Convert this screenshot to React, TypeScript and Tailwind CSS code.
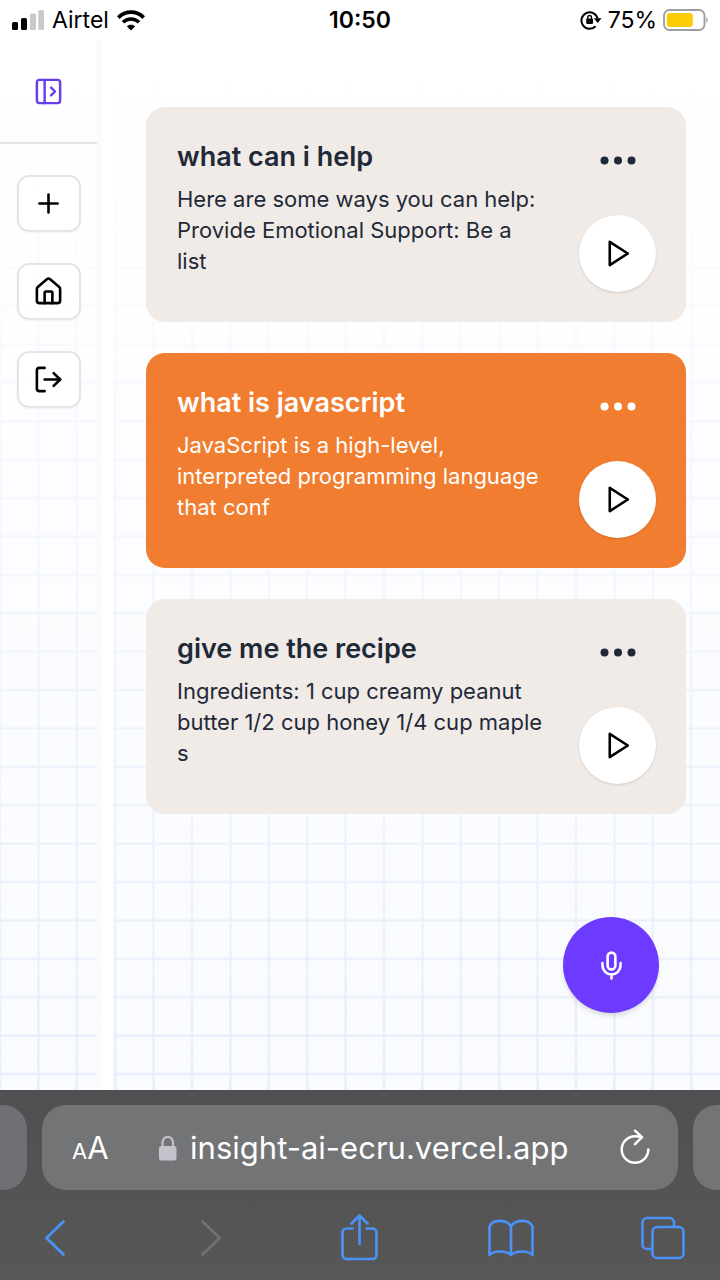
import React from "react";
import { House, LogOut, Mic, PanelLeftOpen, Plus } from "lucide-react";

type Note = { title: string; body: string; active?: boolean };

const notes: Note[] = [
  {
    title: "what can i help",
    body: "Here are some ways you can help: Provide Emotional Support: Be a list",
  },
  {
    title: "what is javascript",
    body: "JavaScript is a high-level, interpreted programming language that conf",
    active: true,
  },
  {
    title: "give me the recipe",
    body: "Ingredients: 1 cup creamy peanut butter 1/2 cup honey 1/4 cup maple s",
  },
];

function GridBackdrop() {
  return (
    <svg className="absolute inset-0 -z-10 h-full w-full" aria-hidden="true">
      <defs>
        <pattern id="cells" x="19.2" y="18" width="38.4" height="38.4" patternUnits="userSpaceOnUse">
          <path d="M19.2 0V38.4M0 19.2H38.4" stroke="#e4ebfa" strokeWidth="1.9" fill="none" />
        </pattern>
        <linearGradient id="fade" x1="0" y1="0" x2="0" y2="1">
          <stop offset="0.06" stopColor="#fff" stopOpacity="0" />
          <stop offset="0.88" stopColor="#fff" stopOpacity="1" />
        </linearGradient>
        <linearGradient id="tint" x1="0" y1="0" x2="0" y2="1">
          <stop offset="0.05" stopColor="#ffffff" />
          <stop offset="0.6" stopColor="#fbfcff" />
          <stop offset="1" stopColor="#f9fbff" />
        </linearGradient>
        <mask id="fadeMask">
          <rect width="100%" height="100%" fill="url(#fade)" />
        </mask>
      </defs>
      <rect width="100%" height="100%" fill="url(#tint)" />
      <rect width="100%" height="100%" fill="url(#cells)" mask="url(#fadeMask)" />
    </svg>
  );
}

function StatusBar() {
  return (
    <header className="grid h-10 grid-cols-[1fr_auto_1fr] items-center bg-white px-3 text-[23px] leading-none text-black">
      <div className="flex items-center gap-2">
        <svg width="32" height="20" viewBox="0 0 32 20" aria-hidden="true">
          <rect x="0" y="12" width="6" height="8" rx="1.6" />
          <rect x="9" y="8" width="6" height="12" rx="1.6" />
          <rect x="18" y="3.5" width="6" height="16.5" rx="1.6" fill="#c9c9c9" />
          <rect x="26.3" y="0" width="5.7" height="20" rx="1.6" fill="#c9c9c9" />
        </svg>
        <span>Airtel</span>
        <svg width="28" height="21" viewBox="0 0 28 21" fill="none" stroke="#000" aria-hidden="true">
          <path d="M1.3 7.6C8.4 .4 19.6 .4 26.7 7.6" strokeWidth="3.7" />
          <path d="M6 12.3c4.5-4.5 11.5-4.5 16 0" strokeWidth="3.5" />
          <path d="M14 20.5l-4.2-4.2c2.3-2.1 6.1-2.1 8.4 0z" fill="#000" stroke="none" />
        </svg>
      </div>
      <span className="font-semibold">10:50</span>
      <div className="flex items-center justify-end gap-1.5">
        <svg width="22" height="20" viewBox="0 0 22 20" fill="none" aria-hidden="true">
          <path d="M15.6 16.2A8.2 8.2 0 1 1 17.6 8.6" stroke="#000" strokeWidth="2" />
          <path d="M13.8 8.3h7.7l-3.8 4.7z" fill="#000" />
          <rect x="6.2" y="8.6" width="6.8" height="5.4" rx="0.9" fill="#000" />
          <path d="M7.7 9.2V7.400a1.900 1.900 0 0 1 3.800 0v1.800" stroke="#000" strokeWidth="1.3" />
        </svg>
        <span>75%</span>
        <svg width="45" height="22" viewBox="0 0 45 22" aria-hidden="true">
          <rect x="1" y="1" width="40.5" height="20" rx="5.5" fill="#fff" stroke="#9c9ca0" strokeWidth="1.8" />
          <rect x="3.8" y="4" width="26" height="14" rx="3" fill="#fbcb04" />
          <path d="M43.400 8v6c1.600-.6 1.600-5.400 0-6z" fill="#9c9ca0" />
        </svg>
      </div>
    </header>
  );
}

function Sidebar() {
  const items = [
    { label: "New note", Icon: Plus },
    { label: "Home", Icon: House },
    { label: "Log out", Icon: LogOut },
  ];
  return (
    <aside className="w-[97px] shrink-0">
      <div className="flex h-[104px] items-center justify-center border-b-2 border-[#e4e4e6]">
        <button type="button" aria-label="Open sidebar" className="text-[#6a3cf0]">
          <PanelLeftOpen size={31} strokeWidth={1.9} />
        </button>
      </div>
      <nav className="flex flex-col items-center gap-[31px] pt-[31px]">
        {items.map(({ label, Icon }) => (
          <button
            key={label}
            type="button"
            aria-label={label}
            className="flex h-[57px] w-16 items-center justify-center rounded-xl border-2 border-[#e5e5e8] bg-white/80 text-black shadow-xs"
          >
            <Icon size={31} strokeWidth={2} />
          </button>
        ))}
      </nav>
    </aside>
  );
}

function NoteCard({ note }: { note: Note }) {
  return (
    <article
      className={
        note.active
          ? "flex gap-[35px] rounded-[19px] bg-[#f17e30] pt-[31px] pr-[30px] pb-[30px] pl-[31px] text-white"
          : "flex gap-[35px] rounded-[19px] bg-[#f0ebe7] pt-[31px] pr-[30px] pb-[30px] pl-[31px] text-[#1f2937]"
      }
    >
      <div className="flex-1 pb-[15px]">
        <h2 className="text-[27px] leading-[38px] font-semibold">{note.title}</h2>
        <p className="mt-2 text-[22px] leading-[31px]">{note.body}</p>
      </div>
      <div className="flex flex-col items-center justify-between pt-[18px]">
        <button type="button" aria-label={`Options for ${note.title}`}>
          <svg width="36" height="9" viewBox="0 0 36 9" fill="currentColor" aria-hidden="true">
            <circle cx="4.5" cy="4.5" r="4" />
            <circle cx="18" cy="4.5" r="4" />
            <circle cx="31.5" cy="4.5" r="4" />
          </svg>
        </button>
        <button
          type="button"
          aria-label={`Play ${note.title}`}
          className="flex size-[77px] items-center justify-center rounded-full bg-white text-black shadow-sm"
        >
          <svg width="31" height="31" viewBox="0 0 24 24" fill="none" stroke="currentColor" strokeWidth="2" strokeLinejoin="round" aria-hidden="true">
            <path d="M6 3l14 9-14 9z" />
          </svg>
        </button>
      </div>
    </article>
  );
}

function BrowserBar() {
  return (
    <footer className="bg-linear-to-b from-[#4f5052] to-[#575757] pt-[15px] text-white">
      <div className="flex gap-[15px]">
        <div className="w-[27px] rounded-r-3xl bg-[#6f7073]" />
        <div className="flex h-[85px] flex-1 items-center justify-between rounded-3xl bg-[#737476] pr-[26px] pl-[30px]">
          <button type="button" aria-label="Page settings" className="flex items-baseline">
            <span className="text-[22px] leading-none">A</span>
            <span className="text-[31px] leading-none">A</span>
          </button>
          <div className="flex items-center gap-3">
            <svg width="20" height="26" viewBox="0 0 20 26" aria-hidden="true">
              <rect x="1" y="11" width="17.5" height="14.5" rx="2.5" fill="#c3c3cb" />
              <path d="M4.5 12V7.5a5.2 5.6 0 0 1 10.5 0V12" fill="none" stroke="#c3c3cb" strokeWidth="2.2" />
            </svg>
            <span className="text-[31px] leading-none">insight-ai-ecru.vercel.app</span>
          </div>
          <button type="button" aria-label="Reload">
            <svg width="34" height="38" viewBox="0 0 34 38" fill="none" stroke="currentColor" strokeWidth="2.5" strokeLinecap="round" strokeLinejoin="round" aria-hidden="true">
              <path d="M30.300 20.500A13.300 13.300 0 1 1 17 7.200c2.300 0 4.500.2 6.500.9" />
              <path d="M17 1.700l7 6.500-7 7" />
            </svg>
          </button>
        </div>
        <div className="w-[27px] rounded-l-3xl bg-[#737476]" />
      </div>
      <div className="flex justify-between pt-6 pr-[33px] pb-[18px] pl-[31px] text-[#4a92f7]">
        <button type="button" aria-label="Back">
          <svg width="48" height="48" viewBox="0 0 48 48" fill="none" stroke="currentColor" strokeWidth="2.8" strokeLinecap="round" strokeLinejoin="round">
            <path d="M32.5 7.5L15.5 24l17 16.5" />
          </svg>
        </button>
        <button type="button" aria-label="Forward" className="text-[#727274]" disabled>
          <svg width="48" height="48" viewBox="0 0 48 48" fill="none" stroke="currentColor" strokeWidth="2.6" strokeLinecap="round" strokeLinejoin="round">
            <path d="M19.5 7.5L36.5 24l-17 16.5" />
          </svg>
        </button>
        <button type="button" aria-label="Share">
          <svg width="48" height="48" viewBox="0 0 48 48" fill="none" stroke="currentColor" strokeWidth="2.7" strokeLinecap="round" strokeLinejoin="round">
            <path d="M17.5 14.5H11.5a4 4 0 0 0-4 4V41a4 4 0 0 0 4 4h26a4 4 0 0 0 4-4V18.5a4 4 0 0 0-4-4H31.5M24.5 30V2M16.5 9.5l8-8 8 8" />
          </svg>
        </button>
        <button type="button" aria-label="Bookmarks">
          <svg width="48" height="48" viewBox="0 0 48 48" fill="none" stroke="currentColor" strokeWidth="2.6" strokeLinecap="round" strokeLinejoin="round">
            <path d="M24 12.5C20 5.500 6 4.500 2.500 12.500v28.500c4.500-4.500 16-5 21.500 0 5.500-5 17-4.500 21.500 0V12.500C42 4.500 28 5.500 24 12.500zV41" />
          </svg>
        </button>
        <button type="button" aria-label="Tabs">
          <svg width="48" height="48" viewBox="0 0 48 48" fill="none" stroke="currentColor" strokeWidth="2.6" strokeLinejoin="round">
            <path d="M12.5 35H8a4.500 4.500 0 0 1-4.500-4.500V8.500A4.500 4.500 0 0 1 8 4h22.500a4.500 4.500 0 0 1 4.500 4.500v4" />
            <rect x="13.5" y="13" width="31" height="31" rx="4.5" />
          </svg>
        </button>
      </div>
    </footer>
  );
}

export default function App() {
  return (
    <div className="relative isolate flex min-h-screen flex-col bg-white font-['Inter','Liberation_Sans',sans-serif]">
      <GridBackdrop />
      <StatusBar />
      <div className="relative flex flex-1">
        <Sidebar />
        <div className="w-4 shrink-0 bg-linear-to-r from-[#f8f8f8] to-white to-50%" />
        <main className="flex flex-1 flex-col gap-[31px] pt-[67px] pr-[34px] pb-[200px] pl-[33px]">
          {notes.map((note) => (
            <NoteCard key={note.title} note={note} />
          ))}
        </main>
        <button
          type="button"
          aria-label="Record"
          className="absolute right-[61px] bottom-[77px] flex size-24 items-center justify-center rounded-full bg-[#6c3bff] text-white shadow-md"
        >
          <Mic size={31} strokeWidth={2} />
        </button>
      </div>
      <BrowserBar />
    </div>
  );
}
